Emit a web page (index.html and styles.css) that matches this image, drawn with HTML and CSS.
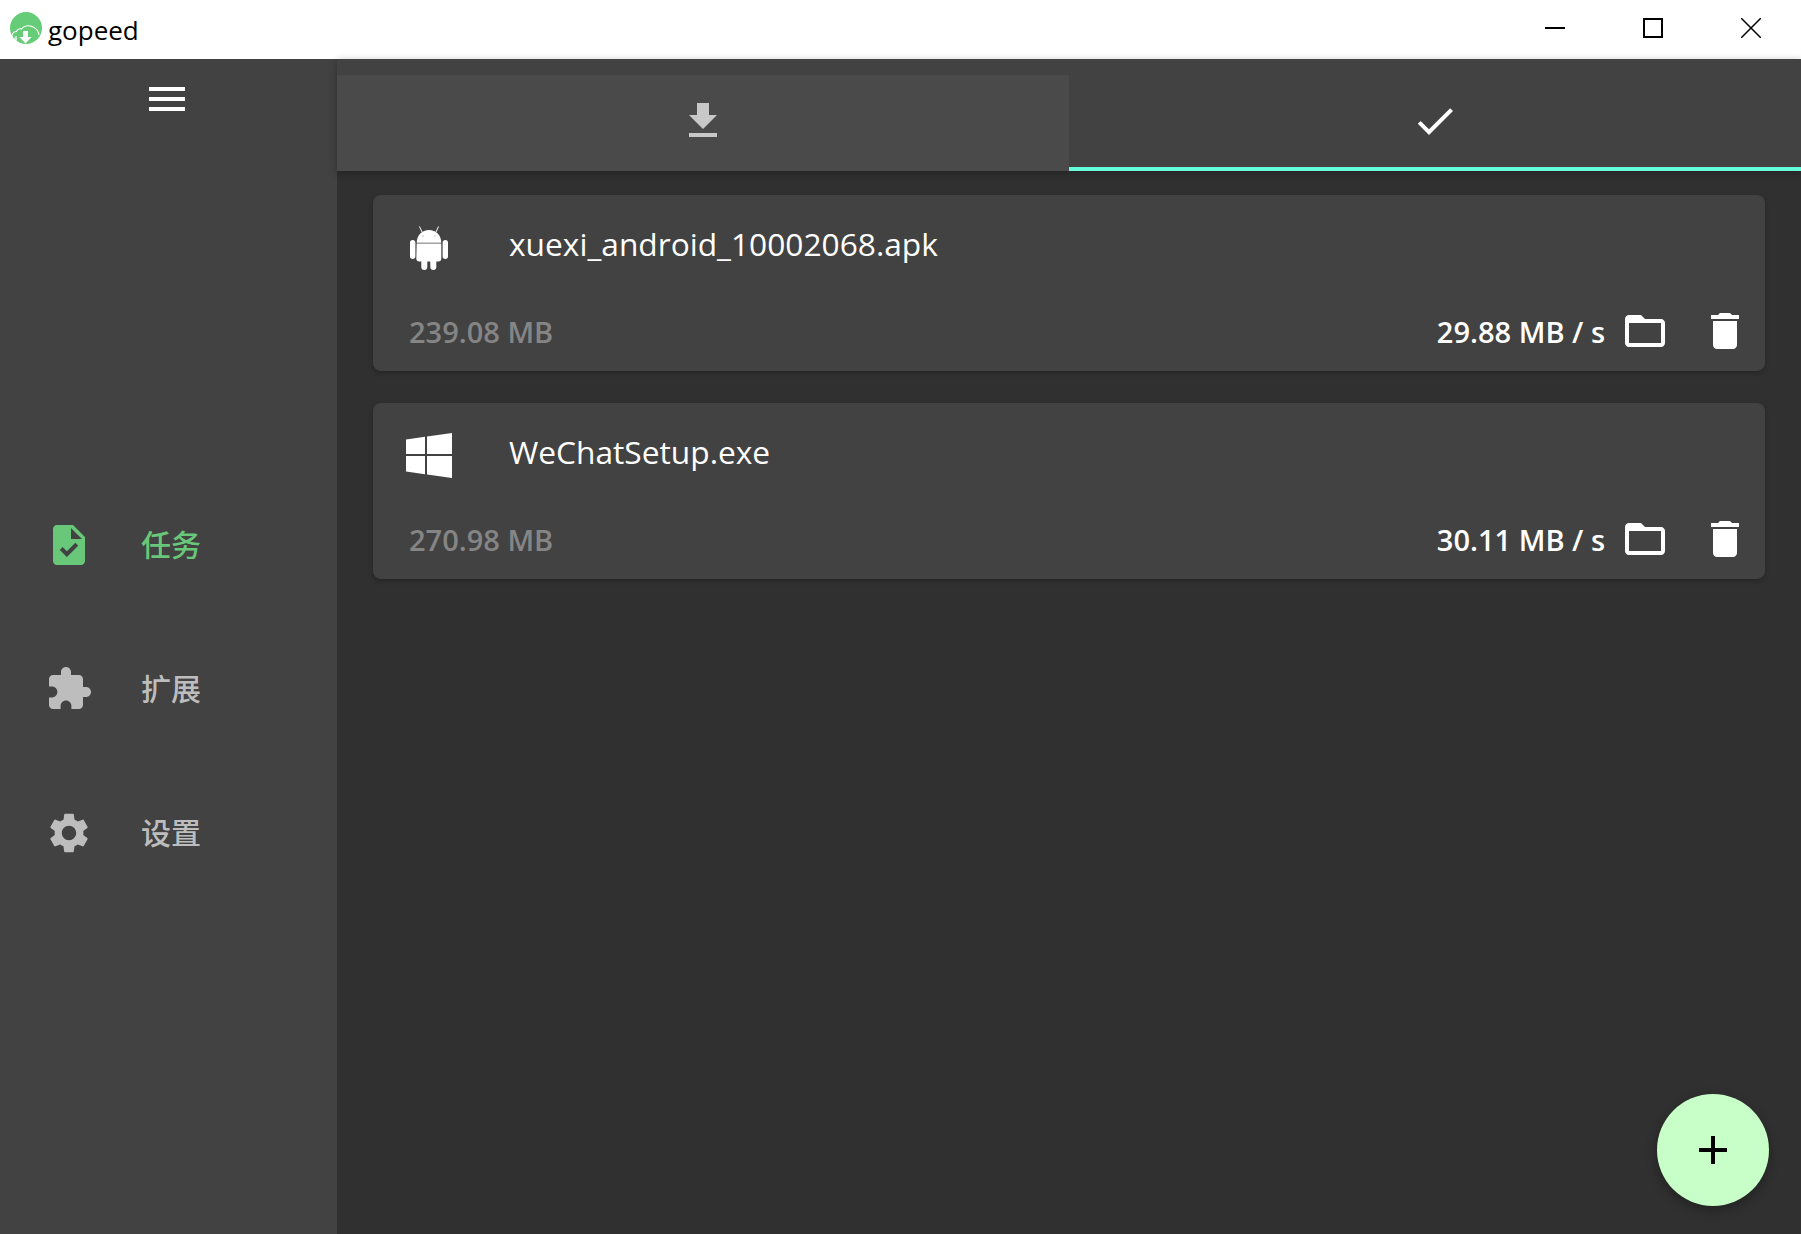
FILE: index.html
```html
<!DOCTYPE html>
<html lang="zh">
<head>
  <meta charset="UTF-8" />
  <meta name="viewport" content="width=device-width, initial-scale=1" />
  <title>gopeed</title>
  <link rel="stylesheet" href="styles.css">
</head>
<body>
  <div class="window">
    <header class="titlebar">
      <div class="brand">
        <svg class="logo" viewBox="0 0 32 32">
          <circle cx="16" cy="16" r="16" fill="#66cc77" />
          <path d="M4 28c-1.500-1-2.200-2.500-2-4.200.3-2.500 2.200-4.200 4.500-4.300.6-2.200 3-3.200 5-2.500C13.500 14 18 13 22 14.500c4 1.500 6.500 4.500 7 8.500" fill="none" stroke="#fff" stroke-width="1.100" />
          <path d="M13 19h5v6h3.500l-6 6.500-6-6.500H13z" fill="#fff" />
          <path d="M4.500 27.500c-.8-2 .5-3.500 2.500-3.500v5z" fill="#fff" opacity=".7" />
        </svg>
        <span class="brand-name">gopeed</span>
      </div>
      <div class="win-controls">
        <button class="win-btn"><svg viewBox="0 0 20 20"><path d="M0 10h20" /></svg></button>
        <button class="win-btn"><svg viewBox="0 0 20 20"><path d="M1 1h18v18H1z" /></svg></button>
        <button class="win-btn"><svg viewBox="0 0 20 20"><path class="thin" d="M0 0l20 20M20 0L0 20" /></svg></button>
      </div>
    </header>

    <div class="app">
      <aside class="sidebar">
        <button class="menu-btn">
          <svg class="icon" viewBox="0 0 24 24"><path d="M3 18h18v-2H3v2zm0-5h18v-2H3v2zm0-7v2h18V6H3z" /></svg>
        </button>
        <nav class="nav">
          <a class="nav-item active">
            <svg class="icon" viewBox="0 0 24 24"><path d="M14 2H6c-1.100 0-1.990.9-1.990 2L4 20c0 1.100.89 2 1.990 2H18c1.100 0 2-.9 2-2V8l-6-6zm-3.060 16L7.400 14.460l1.410-1.410 2.120 2.120 4.240-4.240 1.410 1.410L10.940 18zM13 9V3.500L18.500 9H13z" /></svg>
            <span class="nav-label">任务</span>
          </a>
          <a class="nav-item">
            <svg class="icon" viewBox="0 0 24 24"><path d="M20.500 11H19V7c0-1.100-.9-2-2-2h-4V3.500C13 2.120 11.880 1 10.500 1S8 2.120 8 3.500V5H4c-1.100 0-1.990.9-1.990 2v3.800H3.500c1.490 0 2.700 1.210 2.700 2.700s-1.210 2.700-2.700 2.700H2V20c0 1.100.9 2 2 2h3.800v-1.500c0-1.490 1.210-2.700 2.700-2.700 1.490 0 2.700 1.210 2.700 2.700V22H17c1.100 0 2-.9 2-2v-4h1.500c1.380 0 2.500-1.120 2.500-2.500S21.880 11 20.500 11z" /></svg>
            <span class="nav-label">扩展</span>
          </a>
          <a class="nav-item">
            <svg class="icon" viewBox="0 0 24 24"><path d="M19.140 12.940c.04-.3.06-.61.06-.94 0-.32-.02-.64-.07-.94l2.030-1.580c.18-.14.23-.41.12-.61l-1.920-3.320c-.12-.22-.37-.29-.59-.22l-2.390.96c-.5-.38-1.030-.7-1.620-.94l-.36-2.540c-.04-.24-.24-.41-.48-.41h-3.840c-.24 0-.43.17-.47.41l-.36 2.540c-.59.24-1.130.57-1.620.94l-2.390-.96c-.22-.08-.47 0-.59.22L2.740 8.870c-.12.21-.08.47.12.61l2.030 1.580c-.05.3-.09.63-.09.94s.02.64.07.94l-2.030 1.580c-.18.14-.23.41-.12.61l1.920 3.320c.12.22.37.29.59.22l2.390-.96c.5.38 1.030.7 1.620.94l.36 2.540c.05.24.24.41.48.41h3.840c.24 0 .44-.17.47-.41l.36-2.540c.59-.24 1.130-.56 1.620-.94l2.390.96c.22.08.47 0 .59-.22l1.920-3.320c.12-.22.07-.47-.12-.61l-2.010-1.580zM12 15.600c-1.980 0-3.600-1.620-3.600-3.600s1.620-3.600 3.600-3.600 3.600 1.620 3.600 3.600-1.620 3.600-3.600 3.600z" /></svg>
            <span class="nav-label">设置</span>
          </a>
        </nav>
      </aside>

      <main class="content">
        <div class="appbar">
          <div class="tabs">
            <button class="tab">
              <svg class="icon" viewBox="0 0 24 24"><path d="M19 9h-4V3H9v6H5l7 7 7-7zM5 18v2h14v-2H5z" /></svg>
            </button>
            <button class="tab selected">
              <svg class="icon" viewBox="0 0 24 24"><path d="M9 16.170L4.830 12l-1.420 1.410L9 19 21 7l-1.410-1.410z" /></svg>
            </button>
          </div>
        </div>

        <div class="tasks">
          <div class="card">
            <div class="card-top">
              <svg class="file-icon" viewBox="-4 0 46 45"><path d="M6.700 17.800C6.900 10 12 5 19 5s12.100 5 12.300 12.800z" /><path d="M6.700 18.500h24.600v15c0 1.800-1.100 3-3 3h-2v5.500a3 3 0 0 1-6 0v-5.500h-3v5.500a3 3 0 0 1-6 0v-5.500h-2c-1.900 0-3-1.200-3-3zM2.700 15A2.700 2.700 0 0 1 5.400 17.700v13.600a2.700 2.700 0 0 1-5.400 0V17.700A2.700 2.700 0 0 1 2.700 15zM35.300 15A2.700 2.700 0 0 1 38 17.700v13.600a2.700 2.700 0 0 1-5.400 0V17.700A2.700 2.700 0 0 1 35.300 15z" /><path class="antenna" d="M12 7L9.500 1.500M26 7l2.500-5.500" /><circle class="eye" cx="13" cy="11" r=".8" /><circle class="eye" cx="25" cy="11" r=".8" /></svg>
              <span class="file-name">xuexi_android_10002068.apk</span>
            </div>
            <div class="card-bottom">
              <span class="file-size">239.08 MB</span>
              <div class="card-actions">
                <span class="speed">29.88 MB / s</span>
                <button class="icon-btn"><svg class="icon" viewBox="0 0 24 24"><path d="M20 6h-8l-2-2H4c-1.100 0-1.990.9-1.990 2L2 18c0 1.100.9 2 2 2h16c1.100 0 2-.9 2-2V8c0-1.100-.9-2-2-2zm0 12H4V8h16v10z" /></svg></button>
                <button class="icon-btn"><svg class="icon" viewBox="0 0 24 24"><path d="M6 19c0 1.100.9 2 2 2h8c1.100 0 2-.9 2-2V7H6v12zM19 4h-3.500l-1-1h-5l-1 1H5v2h14V4z" /></svg></button>
              </div>
            </div>
          </div>

          <div class="card">
            <div class="card-top">
              <svg class="file-icon" viewBox="0 0 46 45"><path d="M0 6.500L19 3.800V21H0zM21 3.500L46 0V21H21zM0 23h19v18.200L0 38.500zM21 23h25v22l-25-3.500z" /></svg>
              <span class="file-name">WeChatSetup.exe</span>
            </div>
            <div class="card-bottom">
              <span class="file-size">270.98 MB</span>
              <div class="card-actions">
                <span class="speed">30.11 MB / s</span>
                <button class="icon-btn"><svg class="icon" viewBox="0 0 24 24"><path d="M20 6h-8l-2-2H4c-1.100 0-1.990.9-1.990 2L2 18c0 1.100.9 2 2 2h16c1.100 0 2-.9 2-2V8c0-1.100-.9-2-2-2zm0 12H4V8h16v10z" /></svg></button>
                <button class="icon-btn"><svg class="icon" viewBox="0 0 24 24"><path d="M6 19c0 1.100.9 2 2 2h8c1.100 0 2-.9 2-2V7H6v12zM19 4h-3.500l-1-1h-5l-1 1H5v2h14V4z" /></svg></button>
              </div>
            </div>
          </div>
        </div>

        <button class="fab">
          <svg class="icon" viewBox="0 0 24 24"><path d="M19 13h-6v6h-2v-6H5v-2h6V5h2v6h6v2z" /></svg>
        </button>
      </main>
    </div>
  </div>
</body>
</html>
```

FILE: styles.css
```css
html, body {
  height: 100%;
}
body {
  margin: 0;
  font-family: 'Open Sans', 'Noto Sans CJK SC', sans-serif;
  background: #303030;
  overflow: hidden;
}
button {
  border: none;
  background: none;
  padding: 0;
  color: inherit;
  font: inherit;
  cursor: pointer;
}
.icon {
  display: block;
  width: 48px;
  height: 48px;
  fill: currentColor;
}
.window {
  display: flex;
  flex-direction: column;
  height: 100%;
}
.titlebar {
  display: flex;
  justify-content: space-between;
  height: 59px;
  background: #fff;
  flex: none;
}
.brand {
  display: flex;
  align-items: center;
  gap: 6px;
  padding-left: 10px;
}
.logo {
  width: 32px;
  height: 32px;
  margin-bottom: 3px;
}
.brand-name {
  font-size: 26px;
  color: #000;
  padding-top: 1px;
}
.win-controls {
  display: flex;
  padding-right: 1px;
}
.win-btn {
  width: 98px;
  height: 56px;
  display: flex;
  align-items: center;
  justify-content: center;
}
.win-btn svg {
  width: 20px;
  height: 20px;
  fill: none;
  stroke: #000;
  stroke-width: 2;
}
.win-btn .thin {
  stroke-width: 1.500;
}
.app {
  display: flex;
  flex: 1;
  min-height: 0;
}
.sidebar {
  display: flex;
  flex-direction: column;
  width: 337px;
  flex: none;
  background: #424242;
}
.menu-btn {
  display: flex;
  justify-content: center;
  height: 85px;
  padding: 16px 3px 0 0;
  color: #fff;
}
.nav {
  flex: 1;
  display: flex;
  flex-direction: column;
  justify-content: center;
  gap: 96px;
}
.nav-item {
  display: flex;
  align-items: center;
  gap: 48px;
  height: 48px;
  padding-left: 45px;
  color: #bdbdbd;
  font-size: 30px;
  font-weight: 500;
}
.nav-label {
  padding-bottom: 4px;
}
.nav-item.active {
  color: #69c779;
}
.content {
  position: relative;
  flex: 1;
  display: flex;
  flex-direction: column;
  min-width: 0;
}
.appbar {
  background: #424242;
  padding-top: 16px;
  box-shadow: 0 2px 8px rgba(0, 0, 0, 0.3);
}
.tabs {
  display: flex;
}
.tab {
  flex: 1;
  height: 96px;
  display: flex;
  justify-content: center;
  padding-top: 22px;
  color: #c8c8c8;
  background: #4a4a4a;
}
.tab.selected {
  color: #fff;
  background: #424242;
  border-bottom: 4px solid #64ffda;
}
.tasks {
  display: flex;
  flex-direction: column;
  gap: 32px;
  padding: 24px 36px;
}
.card {
  display: flex;
  flex-direction: column;
  justify-content: space-between;
  height: 176px;
  box-sizing: border-box;
  padding: 0 16px 16px 36px;
  background: #424242;
  border-radius: 8px;
  box-shadow: 0 2px 4px rgba(0, 0, 0, 0.25);
}
.card-top {
  display: flex;
  align-items: center;
  height: 104px;
}
.file-icon {
  width: 46px;
  height: 45px;
  fill: #fff;
  margin-left: -3px;
  margin-right: 57px;
}
.antenna {
  fill: none;
  stroke: #fff;
  stroke-width: 1;
}
.eye {
  fill: #bdbdbd;
}
.file-name {
  font-size: 31.700px;
  color: #fff;
  padding-bottom: 8px;
}
.card-bottom {
  display: flex;
  align-items: center;
  justify-content: space-between;
}
.file-size {
  font-size: 29px;
  font-weight: 600;
  color: #858585;
  padding-top: 1px;
}
.card-actions {
  display: flex;
  align-items: center;
  gap: 32px;
}
.speed {
  font-size: 29px;
  font-weight: 600;
  color: #fff;
  margin-right: -16px;
  padding-top: 1px;
}
.icon-btn {
  color: #fff;
}
.fab {
  position: absolute;
  right: 32px;
  bottom: 28px;
  width: 112px;
  height: 112px;
  border-radius: 50%;
  display: flex;
  align-items: center;
  justify-content: center;
  background: #c8ffc8;
  color: #000;
  box-shadow: 0 4px 12px rgba(0, 0, 0, 0.3);
}
```
